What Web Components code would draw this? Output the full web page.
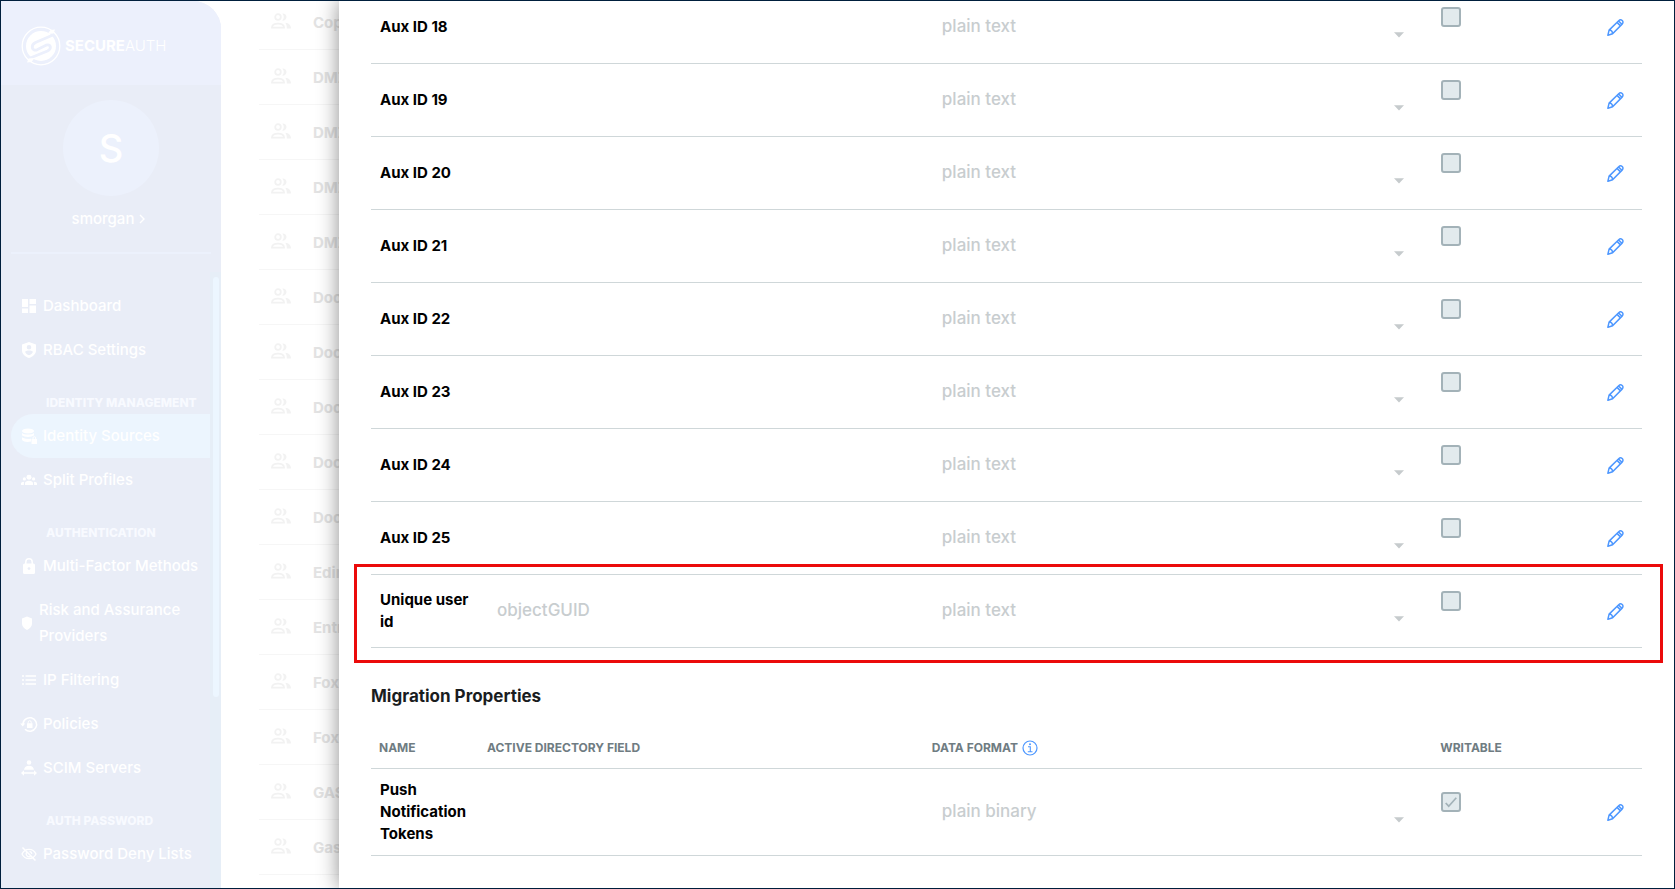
<!DOCTYPE html>
<html lang="en">
<head>
<meta charset="utf-8">
<title>SecureAuth – Identity Sources</title>
<style>
  html, body { margin: 0; height: 100%; }
  body { font-family: Inter, "Liberation Sans", sans-serif; background: #fff; overflow: hidden; }
</style>
</head>
<body>
<sa-shell>
  <sa-sidebar slot="nav"></sa-sidebar>
  <sa-source-list slot="main"></sa-source-list>
  <sa-drawer slot="drawer">
    <sa-attribute-table class="attributes" label="Attributes"></sa-attribute-table>
    <sa-attribute-table class="migration" label="Migration Properties" titled></sa-attribute-table>
  </sa-drawer>
</sa-shell>

<script>
const ICONS = {
  dashboard: ['0 0 16 16', '<path fill="currentColor" d="M1 1h6v8H1zM8.5 1h6.500v5H8.500zM1 10.500h6V15H1zM8.500 7.500H15V15H8.500z"/>'],
  rbac: ['0 0 16 16', '<path fill="currentColor" fill-rule="evenodd" d="M8 0l7 2.600v5.600c0 3.800-3 6.600-7 7.800-4-1.200-7-4-7-7.800V2.600zM8 3a2.300 2.300 0 1 0 0 4.600A2.300 2.300 0 0 0 8 3zM4 9.800c.8 1.700 2.200 2.900 4 3.500 1.800-.6 3.200-1.800 4-3.500-1-.9-2.500-1.300-4-1.300s-3 .4-4 1.300z"/>'],
  database: ['0 0 16 16', '<ellipse cx="7" cy="3" rx="6" ry="2.600" fill="currentColor"/><path fill="currentColor" d="M1 5c2 2 10 2 12 0v2.300c-2 2.300-10 2.300-12 0zM1 9c1.500 1.500 5.500 2 9 1.400V13.500c-4 .9-7.500.2-9-1.500z"/><path fill="currentColor" d="M10.500 11h5.500v5h-5.500z"/><path d="M1 8.400c1.500 1.700 7 2.300 11 .8" fill="none" stroke="#ecf5fe"/><path d="M12 11v-1a1.300 1.300 0 0 1 2.600 0v1" fill="none" stroke="currentColor"/>'],
  groups: ['0 0 18 16', '<g fill="currentColor"><circle cx="9" cy="5" r="2.800"/><circle cx="3.800" cy="6.800" r="1.800"/><circle cx="14.200" cy="6.800" r="1.800"/><path d="M4.500 13.500v-2c0-1.500 2-2.700 4.500-2.700s4.500 1.200 4.500 2.700v2zM0 13.500v-1.500c0-1.200 1.500-2 3.600-2-.4 1-.4 2-.4 3.500zM18 13.500v-1.500c0-1.200-1.500-2-3.600-2 .4 1 .4 2 .4 3.500z"/></g>'],
  lock: ['0 0 16 16', '<rect x="2" y="5.500" width="12" height="10.500" rx="1.500" fill="currentColor"/><path d="M4.800 6V4a3.200 3.200 0 0 1 6.400 0v2" fill="none" stroke="currentColor" stroke-width="1.500"/><circle cx="8" cy="10.600" r="1.400" fill="#e9edf7"/>'],
  shield: ['0 0 12 16', '<path fill="currentColor" d="M6 1.500l5 2v5c0 3-2 5-5 6.500C3 13.500 1 11.500 1 8.500v-5z"/>'],
  list: ['0 0 16 16', '<path d="M1 4h2M1 8h2M1 12h2M4.500 4H15M4.500 8H15M4.500 12H15" stroke="currentColor" stroke-width="1.500"/>'],
  policy: ['0 0 16 16', '<path d="M2 9a6.800 6.800 0 1 1 2 4.300" fill="none" stroke="currentColor" stroke-width="1.500"/><path fill="currentColor" d="M-.8 7.500h5L1.700 10.500zM6 7.300h5.500V12H6z"/><path d="M7.200 7.500V6.200a1.500 1.500 0 0 1 3 0v1.300" fill="none" stroke="currentColor"/>'],
  servers: ['0 0 16 16', '<circle cx="8" cy="2.500" r="2.300" fill="currentColor"/><path fill="currentColor" d="M3 9.800c.5-2.500 2.200-4 5-4s4.500 1.500 5 4zM0 13l3-2.800v2h10v-2L16 13l-3 2.800v-2H3v2z"/>'],
  hidden: ['0 0 16 16', '<path d="M1 8c1.500-3 4-4.700 7-4.700S13.500 5 15 8c-1.500 3-4 4.700-7 4.700S2.500 11 1 8zM5.600 6.200a3 3 0 0 0 4 4.200M8.500 5.300a2.900 2.900 0 0 1 2.300 2.600" fill="none" stroke="currentColor" stroke-width="1.300"/><path d="M1.500 1.500l13 13" stroke="currentColor" stroke-width="1.500"/>'],
  people: ['0 0 20 16', '<g fill="none" stroke="currentColor" stroke-width="1.800"><circle cx="7" cy="4" r="2.800"/><path d="M1 14.600c0-2.500 2.500-4 6-4s6 1.500 6 4z"/></g><path fill="currentColor" d="M11.300.5a3.600 3.600 0 1 1 0 7.100 5.500 5.500 0 0 0 0-7.100zM14.200 9.800c3.600.4 5.800 2.200 5.800 5.700h-4.200c0-2.500-.3-4.200-1.600-5.700z"/>'],
  chevron: ['0 0 8 10', '<path d="M2 1l4 4-4 4" fill="none" stroke="currentColor" stroke-width="1.400"/>'],
  pencil: ['0 0 17 17', '<path d="M.9 16.200l1.200-5.100L11.700 1.700c1.100-1.100 2.400-1.200 3.500-.2 1.100 1.100 1 2.500-.1 3.600L5.600 14.700zM2.100 11.100c2 .1 3.400 1.600 3.500 3.600M10 3.400l3.500 3.500M11.600 1.900l3.300 3.400" fill="none" stroke="currentColor" stroke-width="1.500" stroke-linejoin="round"/>'],
  info: ['0 0 16 16', '<circle cx="8" cy="8" r="7" fill="none" stroke="currentColor" stroke-width="1.200"/><path d="M6 6.800h2.300v4.800M5.800 11.800h4.700" fill="none" stroke="currentColor" stroke-width="1.100"/><circle cx="8" cy="4.300" r="1" fill="currentColor"/>'],
  caret: ['0 0 10 6', '<path fill="currentColor" d="M0 .3h10L5 5.600z"/>'],
  check: ['0 0 12 10', '<path d="M.7 6l3 3.200L11.300.8" fill="none" stroke="currentColor" stroke-width="1.700"/>'],
  logo: ['0 0 40 40', '<circle cx="20" cy="20" r="18.800" fill="none" stroke="currentColor" stroke-width="1.300"/><circle cx="20" cy="20" r="15" fill="currentColor"/><path d="M32 9L14.500 16.500C9.500 19 10.500 25.500 16 23.800L25 19.200C30 17.500 31 22.800 26.500 25L8 32.500" fill="none" stroke="#ecf0fc" stroke-width="2.800"/><path fill="currentColor" d="M26.500 8l3-4L34 3.500l-1.500 4zM13.500 32l-3 4L6 36.500l1.500-4z"/>']
};

/* Gives an element an open shadow root filled from a template string. */
class SaElement extends HTMLElement {
  connectedCallback() {
    if (this.shadowRoot) return;
    const t = document.createElement('template');
    t.innerHTML = this.render();
    this.attachShadow({ mode: 'open' }).append(t.content.cloneNode(true));
  }
}

customElements.define('sa-icon', class extends SaElement {
  render() {
    const [box, body] = ICONS[this.getAttribute('name')];
    return `<style>:host{display:block;flex:none}svg{display:block;width:100%;height:100%;overflow:visible}</style>
      <svg viewBox="${box}" aria-hidden="true">${body}</svg>`;
  }
});

customElements.define('sa-shell', class extends SaElement {
  render() {
    return `<style>
      :host{display:flex;position:relative;box-sizing:border-box;height:100vh;overflow:hidden;border:1px solid #001f3d}
      ::slotted([slot=nav]){flex:0 0 220px}
      ::slotted([slot=main]){flex:1}
      ::slotted([slot=drawer]){position:absolute;inset:0 0 0 338px}
    </style>
    <slot name="nav"></slot><slot name="main"></slot><slot name="drawer"></slot>`;
  }
});

customElements.define('sa-nav-item', class extends SaElement {
  render() {
    return `<style>
      :host{display:block;margin-left:10px}
      a{display:flex;align-items:center;gap:6px;min-height:44px;padding:0 8px 0 10px;box-sizing:border-box;
        color:inherit;text-decoration:none;font-size:15px;font-weight:500;line-height:26px}
      :host([active]) a{background:#ecf5fe;border-radius:22px 0 0 22px}
      :host([wrap]) a{min-height:70px}
      sa-icon{width:16px;height:16px}
      :host([wrap]) sa-icon{width:12px}
    </style>
    <a href="#"><sa-icon name="${this.getAttribute('icon')}"></sa-icon><span><slot></slot></span></a>`;
  }
});

customElements.define('sa-nav-section', class extends SaElement {
  render() {
    return `<style>
      :host{display:block}
      h2{margin:0;padding:22px 0 2px 45px;font-size:12px;line-height:18px;font-weight:800;white-space:nowrap;color:#f8faff}
    </style><h2><slot></slot></h2>`;
  }
});

customElements.define('sa-sidebar', class extends SaElement {
  render() {
    return `<style>
      :host{display:flex;flex-direction:column;box-sizing:border-box;background:#e9edf7;color:#fff;
        border-top-right-radius:28px;overflow:hidden}
      .brand{flex:none;display:flex;align-items:center;gap:4px;height:84px;padding-left:20px;background:#ecf0fc;
        font-size:15px;line-height:20px}
      .brand sa-icon{width:40px;height:40px;margin-top:5px}
      .brand span{margin-top:5px}
      .brand b{font-weight:700}
      .brand i{font-style:normal;font-weight:300}
      .user{flex:none;display:flex;flex-direction:column;align-items:center;gap:12px;height:169px;padding-top:15px;
        margin:0 10px;box-sizing:border-box;border-bottom:2px solid #ecf1fc}
      .avatar{display:grid;place-items:center;width:96px;height:96px;border-radius:50%;background:#ecf1fc;
        font-size:38px;font-weight:500}
      button{display:flex;align-items:center;gap:4px;border:0;padding:0 4px 0 0;background:none;color:inherit;
        font:500 15px/22px Inter,"Liberation Sans",sans-serif}
      button sa-icon{width:8px;height:10px}
      .scroll{flex:1;display:flex;min-height:0;margin-top:18px}
      nav{flex:1;padding-top:12px}
      .track{flex:0 0 6px;padding:5px 2px 0 3px;background:#e6eef7}
      .thumb{height:420px;border-radius:3px;background:#ecf6ff}
    </style>
    <div class="brand"><sa-icon name="logo"></sa-icon><span><b>SECURE</b><i>AUTH</i></span></div>
    <div class="user"><div class="avatar">S</div><button type="button">smorgan<sa-icon name="chevron"></sa-icon></button></div>
    <div class="scroll">
      <nav aria-label="Main">
        <sa-nav-item icon="dashboard">Dashboard</sa-nav-item>
        <sa-nav-item icon="rbac">RBAC Settings</sa-nav-item>
        <sa-nav-section>IDENTITY MANAGEMENT</sa-nav-section>
        <sa-nav-item icon="database" active>Identity Sources</sa-nav-item>
        <sa-nav-item icon="groups">Split Profiles</sa-nav-item>
        <sa-nav-section>AUTHENTICATION</sa-nav-section>
        <sa-nav-item icon="lock">Multi-Factor Methods</sa-nav-item>
        <sa-nav-item icon="shield" wrap>Risk and Assurance Providers</sa-nav-item>
        <sa-nav-item icon="list">IP Filtering</sa-nav-item>
        <sa-nav-item icon="policy">Policies</sa-nav-item>
        <sa-nav-item icon="servers">SCIM Servers</sa-nav-item>
        <sa-nav-section>AUTH PASSWORD</sa-nav-section>
        <sa-nav-item icon="hidden">Password Deny Lists</sa-nav-item>
      </nav>
      <div class="track"><div class="thumb"></div></div>
    </div>`;
  }
});

customElements.define('sa-source-list', class extends SaElement {
  render() {
    const names = ['Cop', 'DMZ', 'DMZ', 'DMZ', 'DMZ', 'Doc', 'Doc', 'Doc', 'Doc', 'Doc', 'Edin', 'Entr', 'Fox', 'Fox', 'GAS', 'Gas', ''];
    return `<style>
      :host{display:block;overflow:hidden}
      ul{list-style:none;margin:-6px 38px 0;padding:0}
      li{display:flex;align-items:center;gap:22px;height:54px;padding-left:12px;border-bottom:1px solid #f6f6f6;
        font-size:15px;font-weight:700;color:#e3e3e3}
      sa-icon{width:20px;height:16px;margin-bottom:2px;color:#f2f2f2}
    </style>
    <ul>${names.map(n => `<li>${n ? `<sa-icon name="people"></sa-icon>${n}` : ''}</li>`).join('')}</ul>`;
  }
});

customElements.define('sa-drawer', class extends SaElement {
  render() {
    return `<style>
      :host{display:block;box-sizing:border-box;padding:0 32px;background:#fff;box-shadow:0 0 20px rgba(0,0,0,.45)}
      ::slotted(.attributes){margin-top:-10px}
      ::slotted(.migration){margin-top:36px}
    </style><slot></slot>`;
  }
});

const ROWS = {
  attributes: [18, 19, 20, 21, 22, 23, 24, 25].map(n => ({ name: 'Aux ID ' + n, format: 'plain text' }))
    .concat({ name: 'Unique user id', field: 'objectGUID', format: 'plain text', marked: true }),
  migration: [{ name: 'Push Notification Tokens', format: 'plain binary', checked: true }]
};

customElements.define('sa-attribute-table', class extends SaElement {
  render() {
    const titled = this.hasAttribute('titled');
    const rows = ROWS[this.className];
    return `<style>
      :host{display:block}
      h3{margin:0 0 19px;font-size:17px;line-height:24px;font-weight:700;color:#1a1d1f}
      table{width:100%;border-collapse:separate;border-spacing:0;table-layout:fixed}
      .name{width:108px}.field{width:35%}.format{width:40%}.write{width:9%}
      th,td{box-sizing:border-box;padding:10px 8px;text-align:left;vertical-align:middle;border-bottom:1px solid #cfd7d9}
      thead th{padding:9px 8px;height:42px;font-size:12px;line-height:18px;font-weight:700;color:#6f7c82;white-space:nowrap}
      thead div{display:flex;align-items:center;gap:4px}
      thead sa-icon{width:16px;height:16px;color:#4d97ff}
      tbody th{padding:10px 0 10px 9px;font-size:15px;line-height:22px;font-weight:700;color:#000}
      tr.marked{position:relative}
      tr.marked th::after{content:"";position:absolute;inset:-11px -21px -15px -17px;border:3px solid #eb0a0a;pointer-events:none}
      input[type=text],select{box-sizing:border-box;display:block;width:100%;height:52px;margin:0;border:0;padding:0 10px 2px;
        background:none;appearance:none;opacity:1;color:#c8cdcf;font:500 17px/24px Inter,"Liberation Sans",sans-serif}
      .pick{display:grid;align-items:center}
      .pick>*{grid-area:1/1}
      .pick sa-icon{justify-self:end;width:10px;height:6px;margin:16px 20px 0 0;color:#c6cbcd}
      .box{display:grid;width:22px;height:40px;padding-left:1px;box-sizing:border-box}
      .box>*{grid-area:1/1}
      .box input{appearance:none;box-sizing:border-box;width:20px;height:20px;margin:0;border:2px solid #a3b2b8;
        border-radius:3px;background:#e2eaed}
      .box sa-icon{width:12px;height:10px;margin:5px 4px;color:#a3b2b8}
      button{display:block;margin:0 10px 0 auto;padding:0;border:0;background:none;color:#4d97ff}
      button sa-icon{width:17px;height:17px}
    </style>
    ${titled ? `<h3>${this.getAttribute('label')}</h3>` : ''}
    <table aria-label="${this.getAttribute('label')}">
      <colgroup><col class="name"><col class="field"><col class="format"><col class="write"><col></colgroup>
      ${titled ? `<thead><tr><th>NAME</th><th>ACTIVE DIRECTORY FIELD</th><th><div>DATA FORMAT<sa-icon name="info"></sa-icon></div></th><th>WRITABLE</th><th></th></tr></thead>` : ''}
      <tbody>${rows.map((r, i) => `
        <tr${r.marked ? ' class="marked"' : ''}>
          <th scope="row" id="n${i}">${r.name}</th>
          <td><input type="text" aria-labelledby="n${i}" value="${r.field || ''}" disabled></td>
          <td><div class="pick"><select aria-labelledby="n${i}" disabled><option>${r.format}</option></select><sa-icon name="caret"></sa-icon></div></td>
          <td><div class="box"><input type="checkbox" aria-labelledby="n${i}" disabled${r.checked ? ' checked' : ''}>${r.checked ? '<sa-icon name="check"></sa-icon>' : ''}</div></td>
          <td><button type="button" aria-label="Edit ${r.name}"><sa-icon name="pencil"></sa-icon></button></td>
        </tr>`).join('')}
      </tbody>
    </table>`;
  }
});
</script>
</body>
</html>
